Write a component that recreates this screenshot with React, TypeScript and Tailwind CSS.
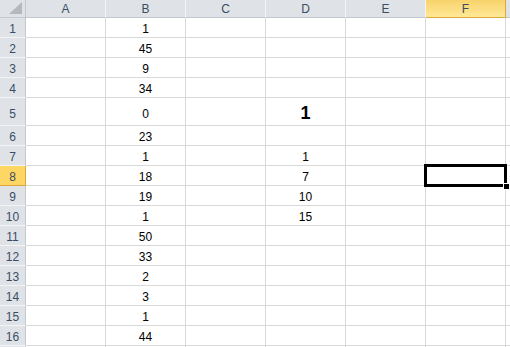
import React from "react";

const COLS = ["A", "B", "C", "D", "E", "F", "G"];

type Cell = { text: string; bold?: boolean };

const colB = ["1", "45", "9", "34", "0", "23", "1", "18", "19", "1", "50", "33", "2", "3", "1", "44"];
const colD: Record<number, Cell> = {
  5: { text: "1", bold: true },
  7: { text: "1" },
  8: { text: "7" },
  9: { text: "10" },
  10: { text: "15" },
};

const ROWS = Array.from({ length: 17 }, (_, i) => i + 1);

export default function App() {
  const font = { fontFamily: '"Liberation Sans", Arial, sans-serif' };

  return (
    <div className="relative w-[510px] h-[347px] overflow-hidden bg-white" style={font}>
      {/* column headers */}
      <div className="flex h-[18px]">
        <div className="relative w-[26px] shrink-0 bg-[#dfe3e8] border-r border-b border-[#c3c8ce]">
          <svg className="absolute right-[3px] bottom-[3px]" width="13" height="12" viewBox="0 0 13 12">
            <polygon points="13,0 13,12 0,12" fill="#b4b9bf" />
          </svg>
        </div>
        {COLS.map((c) =>
          c === "F" ? (
            <div
              key={c}
              className="w-[80px] shrink-0 flex items-center justify-center pt-[1px] text-[12px] text-[#3a4d63] bg-gradient-to-b from-[#f8d36c] to-[#ffe895] border-r border-b border-[#e0a83a]"
            >
              {c}
            </div>
          ) : (
            <div
              key={c}
              className="w-[80px] shrink-0 flex items-center justify-center pt-[1px] text-[12px] text-[#3a4d63] bg-[#dfe3e8] border-r border-r-[#f2f4f6] border-b border-b-[#c3c8ce]"
            >
              {c === "G" ? "" : c}
            </div>
          )
        )}
      </div>

      {/* rows */}
      {ROWS.map((r) => {
        const tall = r === 5;
        const sel = r === 8;
        const pb = tall ? "pb-[4px]" : "pb-[1px]";
        const d = colD[r];
        return (
          <div key={r} className={`flex ${tall ? "h-[28px]" : "h-[20px]"}`}>
            <div
              className={`w-[26px] shrink-0 flex items-end justify-center text-[12px] leading-[13px] text-[#3a4d63] border-r border-b ${pb} ${
                sel
                  ? "bg-[#fdd663] border-r-[#e0a83a] border-b-[#e0a83a]"
                  : "bg-[#dfe3e8] border-r-[#c3c8ce] border-b-[#f2f4f6]"
              }`}
            >
              {r <= 16 ? r : ""}
            </div>
            {COLS.map((c) => {
              let content: React.ReactNode = null;
              let cls = pb;
              if (c === "B" && r <= 16) content = colB[r - 1];
              if (c === "D" && d) {
                content = d.text;
                if (d.bold) cls = "pb-[2px] text-[18px] font-bold leading-[20px]";
              }
              return (
                <div
                  key={c}
                  className={`w-[80px] shrink-0 flex items-end justify-center text-[12px] leading-[13px] text-black border-r border-b border-[#d9d9d9] ${cls}`}
                >
                  {content}
                </div>
              );
            })}
          </div>
        );
      })}

      {/* active cell F8 */}
      <div className="absolute left-[424px] top-[164px] w-[83px] h-[23px] border-[3px] border-black" />
      <div className="absolute left-[503px] top-[183px] w-[7px] h-[7px] bg-black border border-white" />
    </div>
  );
}
